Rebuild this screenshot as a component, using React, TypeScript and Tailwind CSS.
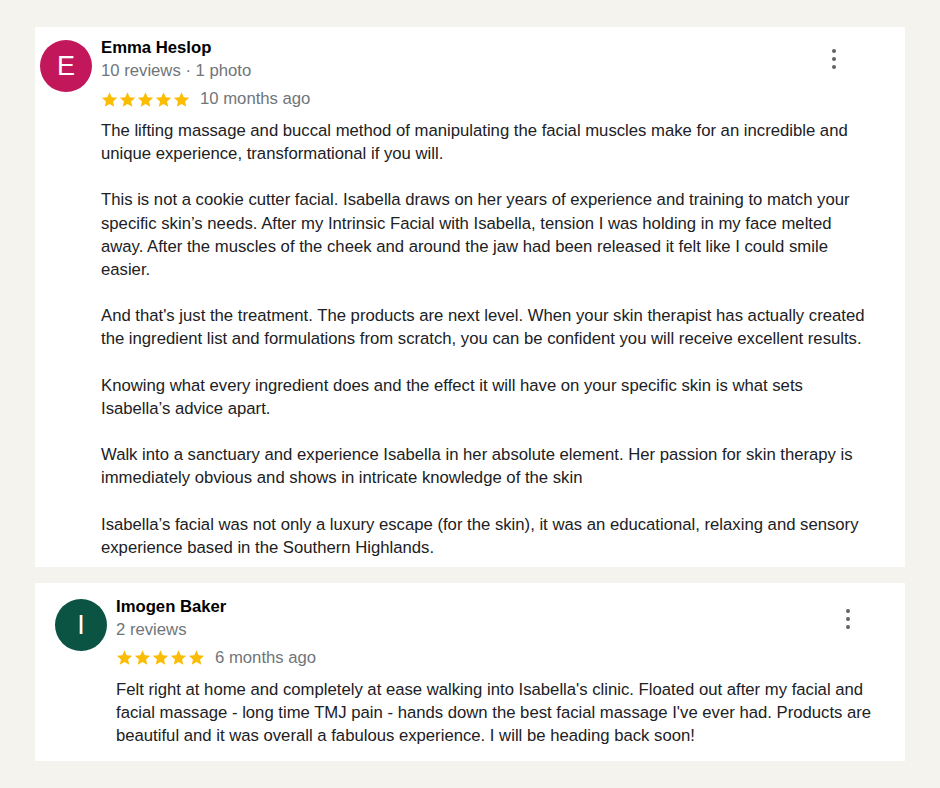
import React, { FC } from "react";

interface Review {
  id: number;
  name: string;
  meta: string;
  initial: string;
  avatar: string;
  ago: string;
  paragraphs: string[];
}

const reviews: Review[] = [
  {
    id: 1,
    name: "Emma Heslop",
    meta: "10 reviews · 1 photo",
    initial: "E",
    avatar: "bg-[#c2185b]",
    ago: "10 months ago",
    paragraphs: [
      "The lifting massage and buccal method of manipulating the facial muscles make for an incredible and unique experience, transformational if you will.",
      "This is not a cookie cutter facial. Isabella draws on her years of experience and training to match your specific skin’s needs. After my Intrinsic Facial with Isabella, tension I was holding in my face melted away. After the muscles of the cheek and around the jaw had been released it felt like I could smile easier.",
      "And that's just the treatment. The products are next level. When your skin therapist has actually created the ingredient list and formulations from scratch, you can be confident you will receive excellent results.",
      "Knowing what every ingredient does and the effect it will have on your specific skin is what sets Isabella’s advice apart.",
      "Walk into a sanctuary and experience Isabella in her absolute element. Her passion for skin therapy is immediately obvious and shows in intricate knowledge of the skin",
      "Isabella’s facial was not only a luxury escape (for the skin), it was an educational, relaxing and sensory experience based in the Southern Highlands.",
    ],
  },
  {
    id: 2,
    name: "Imogen Baker",
    meta: "2 reviews",
    initial: "I",
    avatar: "bg-[#0b5443]",
    ago: "6 months ago",
    paragraphs: [
      "Felt right at home and completely at ease walking into Isabella's clinic. Floated out after my facial and facial massage - long time TMJ pain - hands down the best facial massage I've ever had. Products are beautiful and it was overall a fabulous experience. I will be heading back soon!",
    ],
  },
];

const Star: FC = () => (
  <svg width="17" height="17" viewBox="0 0 24 24" className="fill-[#fbbc04]">
    <path d="M12 1.8l3.1 7.1 7.7.7-5.8 5.1 1.7 7.6L12 18.3l-6.7 4 1.7-7.6-5.8-5.1 7.7-.7z" />
  </svg>
);

const MoreIcon: FC = () => (
  <svg width="4" height="20" viewBox="0 0 4 20" className="fill-[#5f6368]">
    <circle cx="2" cy="2" r="2" />
    <circle cx="2" cy="10" r="2" />
    <circle cx="2" cy="18" r="2" />
  </svg>
);

const ReviewCard: FC<{ review: Review; first: boolean }> = ({ review, first }) => (
  <div
    className={`bg-white flex gap-[9px] ${
      first ? "pl-[5px] pr-[69px] pt-[11px] pb-[8px]" : "pl-[20px] pr-[55px] pt-[14px] pb-[14px]"
    }`}
  >
    <div
      className={`${review.avatar} w-[52px] h-[52px] rounded-full shrink-0 flex items-center justify-center text-white text-[27px] mt-[2px]`}
    >
      {review.initial}
    </div>
    <div className="flex-1 min-w-0">
      <div className="flex justify-between">
        <div>
          <div className="text-[16.7px] font-bold text-black leading-[20px]">{review.name}</div>
          <div className="text-[16.7px] text-[#70757a] leading-[22px] mt-[2px]">{review.meta}</div>
          <div className="flex items-center mt-[6px] h-[22px]">
            <div className="flex gap-[1px]">
              {[0, 1, 2, 3, 4].map((i) => (
                <Star key={i} />
              ))}
            </div>
            <span className="ml-[10px] text-[16.7px] text-[#70757a]">{review.ago}</span>
          </div>
        </div>
        <div className={first ? "pt-[11px]" : "pt-[12px]"}>
          <MoreIcon />
        </div>
      </div>
      <div
        className={`mt-[9px] text-[16.7px] leading-[23.15px] text-[#202124] flex flex-col gap-[23.15px] ${
          first ? "w-[766px]" : "w-[760px]"
        }`}
      >
        {review.paragraphs.map((p, i) => (
          <p key={i}>{p}</p>
        ))}
      </div>
    </div>
  </div>
);

const App: FC = () => {
  return (
    <div
      className="w-[940px] h-[788px] bg-[#f4f3ee] px-[35px] pt-[27px] flex flex-col gap-[16px]"
      style={{ fontFamily: '"Liberation Sans", Arial, sans-serif' }}
    >
      {reviews.map((r, i) => (
        <ReviewCard key={r.id} review={r} first={i === 0} />
      ))}
    </div>
  );
};

export default App;
